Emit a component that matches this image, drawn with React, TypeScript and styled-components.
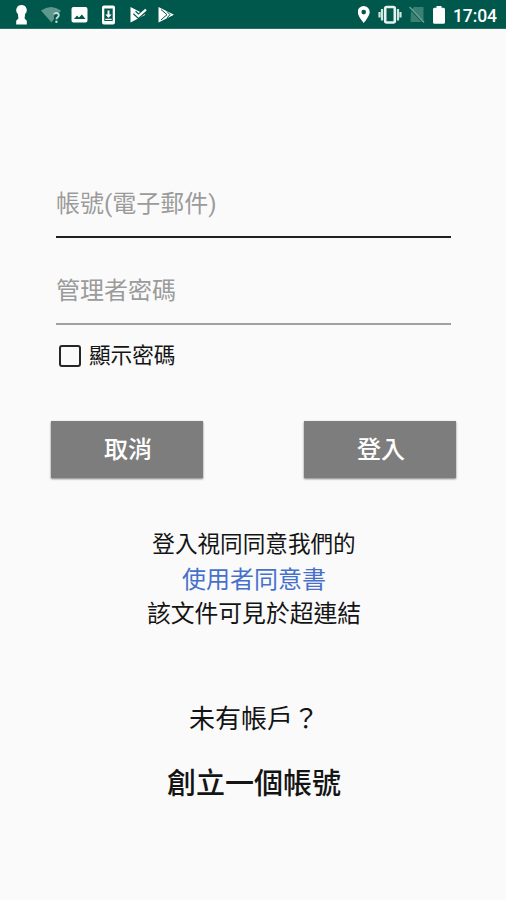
import React from "react";
import styled, { createGlobalStyle } from "styled-components";

const GlobalStyle = createGlobalStyle`
  * { box-sizing: border-box; }
  body { margin: 0; background: #fafafa; }
`;

const Screen = styled.div`
  width: 506px;
  height: 900px;
  display: flex;
  flex-direction: column;
  background: #fafafa;
  color: #141414;
  font-family: Roboto, "Noto Sans CJK TC", sans-serif;
  overflow: hidden;
`;

const StatusBar = styled.header`
  height: 29px;
  flex: none;
  display: flex;
  justify-content: space-between;
  background: #00574b;
  border-bottom: 1px solid #2a6f64;
  color: #fff;
`;

const StatusIcons = styled.svg`
  display: block;
  height: 28px;
`;

const StatusEnd = styled.div`
  display: flex;
`;

const Clock = styled.time`
  width: 53px;
  font-size: 17.5px;
  line-height: 32px;
  font-weight: 500;
  letter-spacing: -0.1px;
`;

const Form = styled.form`
  display: flex;
  flex-direction: column;
  gap: 29px;
  padding: 151px 55px 0 56px;
`;

const Field = styled.input<{ $active?: boolean }>`
  width: 100%;
  height: 58px;
  padding: 0 0 9px;
  border: 0;
  border-bottom: 2px solid ${(p) => (p.$active ? "#221f20" : "#a0a0a0")};
  border-radius: 0;
  outline: 0;
  background: transparent;
  font: 24px/36px Roboto, "Noto Sans CJK TC", sans-serif;
  &::placeholder {
    color: #9b9b9b;
    opacity: 1;
  }
`;

const CheckRow = styled.label`
  display: flex;
  align-items: center;
  gap: 8px;
  height: 32px;
  margin-top: -14px;
  padding-left: 3px;
  font-size: 21.6px;
  line-height: 32px;
`;

const Checkbox = styled.input`
  appearance: none;
  width: 22px;
  height: 22px;
  margin: 0;
  border: 2px solid #252525;
  border-radius: 3px;
`;

const Actions = styled.div`
  display: flex;
  justify-content: space-between;
  margin: 20px -5px 0;
`;

const Button = styled.button`
  width: 152px;
  height: 57px;
  padding: 0 0 0 2px;
  border: 0;
  background: #7d7d7d;
  box-shadow: 0 1px 2px rgba(0, 0, 0, 0.5);
  color: #fff;
  font: 500 24px/36px Roboto, "Noto Sans CJK TC", sans-serif;
`;

const Notice = styled.section`
  display: flex;
  flex-direction: column;
  align-items: center;
  margin-top: 50px;
  padding-left: 2px;
`;

const Line = styled.p<{ $size: number }>`
  margin: 0;
  font-size: ${(p) => p.$size}px;
  line-height: 34.5px;
  white-space: nowrap;
`;

const TermsLink = styled.a`
  color: #4770cc;
  font-size: 24px;
  line-height: 34.5px;
`;

const SignUp = styled.section`
  display: flex;
  flex-direction: column;
  align-items: center;
  margin-top: 66px;
  padding-left: 2px;
`;

const Question = styled.p`
  margin: 0;
  font-size: 26px;
  line-height: 42px;
`;

const CreateLink = styled.a`
  margin-top: 22px;
  font-size: 29px;
  line-height: 44px;
  font-weight: 500;
`;

const NotificationIcons = () => (
  <StatusIcons width="180" viewBox="0 0 180 28">
    <g fill="#fff">
      <path d="M21.5 5a5.2 5.2 0 0 1 3.6 9l-.5 4.5 2.2 2.2V24.500H16.200v-3.800l2.200-2.200-.5-4.500a5.200 5.200 0 0 1 3.600-9z" />
      <path fill="#5d978d" d="M41 10.500Q51 3.500 61 10.500L59.500 12.500H54v6.500L51.500 22.500z" />
      <path fill="none" stroke="#c4dcd7" strokeWidth="1.800" d="M54 14.500c.5-2.200 4.800-2 4.800.7 0 2-2.400 2-2.400 4" />
      <circle cx="56.400" cy="21.700" r="1.200" fill="#c4dcd7" />
      <path fillRule="evenodd" d="M73.500 7h12a2 2 0 0 1 2 2v11.500a2 2 0 0 1-2 2h-12a2 2 0 0 1-2-2V9a2 2 0 0 1 2-2zM74 19h11.500l-3.600-4.600-2.900 3.200-2-2z" />
      <path fillRule="evenodd" d="M104 5.500h9a2 2 0 0 1 2 2V22.500a2 2 0 0 1-2 2h-9a2 2 0 0 1-2-2V7.500a2 2 0 0 1 2-2zM104.300 8.500v12.500h8.400V8.500z" />
      <path d="M107.500 10.500h2v4h2.200l-3.200 3.500-3.200-3.500h2.200zM105.300 18.800h6.400v1.200h-6.400z" />
      <path d="M130.500 7l15 7.700-15 7.800z" />
      <path fill="none" stroke="#00574b" strokeWidth="4.500" d="M134.500 12.500l4 3.700 8.500-7" />
      <path fill="none" stroke="#fff" strokeWidth="2.200" d="M134.500 12.500l4 3.700 7.500-6.500" />
      <path d="M158.500 7l15.500 7.700-15.500 7.800z" />
      <path fill="none" stroke="#00574b" strokeWidth="1" d="M161 9.500l6 5.200-6 5.200M167 11.500l3 3.200-3 3.200" />
    </g>
  </StatusIcons>
);

const SystemIcons = () => (
  <StatusIcons width="95" viewBox="358 0 95 28">
    <path fill="#fff" fillRule="evenodd" d="M363.700 6a6 6 0 0 1 6 6c0 4.200-6 11-6 11s-6-6.800-6-11a6 6 0 0 1 6-6zm0 3.800a2.300 2.300 0 1 0 0 4.600 2.300 2.300 0 0 0 0-4.600z" />
    <rect x="385.200" y="7" width="9.600" height="15.500" rx="1.500" fill="none" stroke="#e7f1ef" strokeWidth="2.600" />
    <path fill="none" stroke="#d0e3df" strokeWidth="2.200" d="M382 9v11.500M398 9v11.500M379.500 12v5.500M400.500 12v5.500" />
    <path fill="#3b8073" d="M411 10l3-3h9.500v15h-13z" />
    <path fill="none" stroke="#00574b" strokeWidth="1.400" d="M410 9l14 14.500" />
    <path fill="none" stroke="#6aa198" strokeWidth="1.300" d="M409.500 7l14.500 15.500" />
    <path fill="#fff" d="M436.500 6h5v1.800h2a1.500 1.500 0 0 1 1.500 1.500v13a1.500 1.500 0 0 1-1.500 1.500h-9a1.500 1.500 0 0 1-1.500-1.500v-13a1.500 1.500 0 0 1 1.500-1.500h2z" />
  </StatusIcons>
);

export default function App() {
  return (
    <>
      <GlobalStyle />
      <Screen>
        <StatusBar>
          <NotificationIcons />
          <StatusEnd>
            <SystemIcons />
            <Clock>17:04</Clock>
          </StatusEnd>
        </StatusBar>
        <Form>
          <Field $active placeholder="帳號(電子郵件)" />
          <Field type="password" placeholder="管理者密碼" />
          <CheckRow>
            <Checkbox type="checkbox" />
            顯示密碼
          </CheckRow>
          <Actions>
            <Button type="button">取消</Button>
            <Button type="button">登入</Button>
          </Actions>
        </Form>
        <Notice>
          <Line $size={22.6}>登入視同同意我們的</Line>
          <TermsLink>使用者同意書</TermsLink>
          <Line $size={23.8}>該文件可見於超連結</Line>
        </Notice>
        <SignUp>
          <Question>未有帳戶？</Question>
          <CreateLink>創立一個帳號</CreateLink>
        </SignUp>
      </Screen>
    </>
  );
}
